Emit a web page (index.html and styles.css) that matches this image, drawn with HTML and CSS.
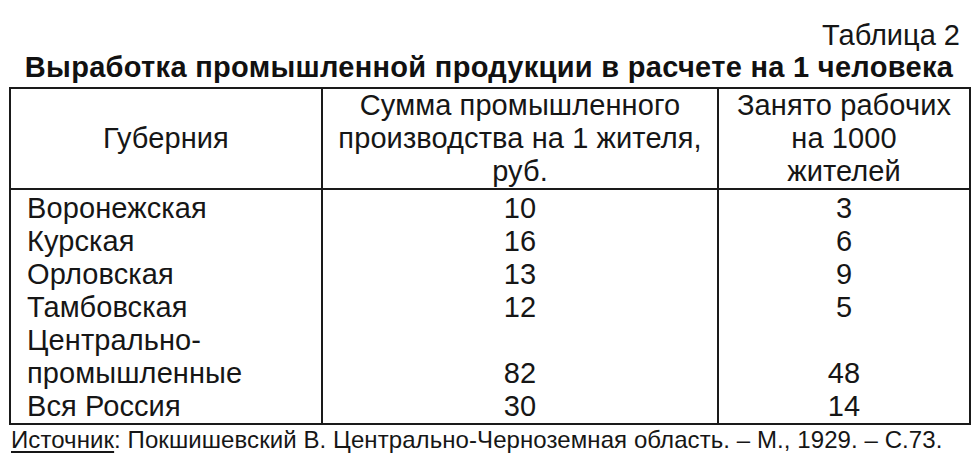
FILE: index.html
```html
<!DOCTYPE html>
<html lang="ru">
<head>
<meta charset="utf-8">
<title>Таблица 2</title>
<link rel="stylesheet" href="styles.css">
</head>
<body>
<div class="page">
  <div class="table-num">Таблица 2</div>
  <h1 class="title">Выработка промышленной продукции в расчете на 1 человека</h1>
  <table class="data">
    <colgroup>
      <col class="c-name">
      <col class="c-sum">
      <col class="c-work">
    </colgroup>
    <thead>
      <tr>
        <th>Губерния</th>
        <th>Сумма промышленного<br>производства на 1 жителя,<br>руб.</th>
        <th>Занято рабочих<br>на 1000<br>жителей</th>
      </tr>
    </thead>
    <tbody>
      <tr class="first"><td class="name">Воронежская</td><td class="num">10</td><td class="num">3</td></tr>
      <tr><td class="name">Курская</td><td class="num">16</td><td class="num">6</td></tr>
      <tr><td class="name">Орловская</td><td class="num">13</td><td class="num">9</td></tr>
      <tr><td class="name">Тамбовская</td><td class="num">12</td><td class="num">5</td></tr>
      <tr><td class="name">Центрально-<br>промышленные</td><td class="num">82</td><td class="num">48</td></tr>
      <tr class="last"><td class="name">Вся Россия</td><td class="num">30</td><td class="num">14</td></tr>
    </tbody>
  </table>
  <p class="source"><span class="src-label">Источник</span>: Покшишевский В. Центрально-Черноземная область. – М., 1929. – С.73.</p>
</div>
</body>
</html>
```

FILE: styles.css
```css
html, body {
  margin: 0;
  padding: 0;
  background: #ffffff;
}

body {
  font-family: "Liberation Sans", Arial, sans-serif;
  color: #161616;
}

.page {
  width: 980px;
  height: 476px;
  box-sizing: border-box;
  padding: 19px 11px 0 9px;
  overflow: hidden;
}

.table-num {
  font-size: 29px;
  line-height: 33px;
  text-align: right;
  padding-right: 9px;
}

.title {
  margin: 0 0 5px 0;
  font-size: 29px;
  line-height: 30px;
  letter-spacing: 0.3px;
  font-weight: bold;
  text-align: center;
  color: #111;
}

.data {
  width: 960px;
  border-collapse: collapse;
  table-layout: fixed;
  border: 2px solid #1a1a1a;
  font-size: 29px;
  line-height: 33px;
  letter-spacing: 0.1px;
}

.c-name { width: 312px; }
.c-sum { width: 396px; }
.c-work { width: 252px; }

.data th {
  font-weight: normal;
  text-align: center;
  vertical-align: middle;
  padding: 0;
  border: 2px solid #1a1a1a;
}

.data td {
  padding: 0;
  border-left: 2px solid #1a1a1a;
  border-right: 2px solid #1a1a1a;
  vertical-align: bottom;
}

.data td.name {
  text-align: left;
  padding-left: 16px;
}

.data td.num {
  text-align: center;
}

.data tr.first td {
  padding-top: 2px;
}

.source {
  margin: 0;
  padding-left: 2px;
  font-size: 24px;
  line-height: 30px;
  letter-spacing: 0.08px;
}

.src-label {
  text-decoration: underline;
  text-underline-offset: 3px;
}
```
